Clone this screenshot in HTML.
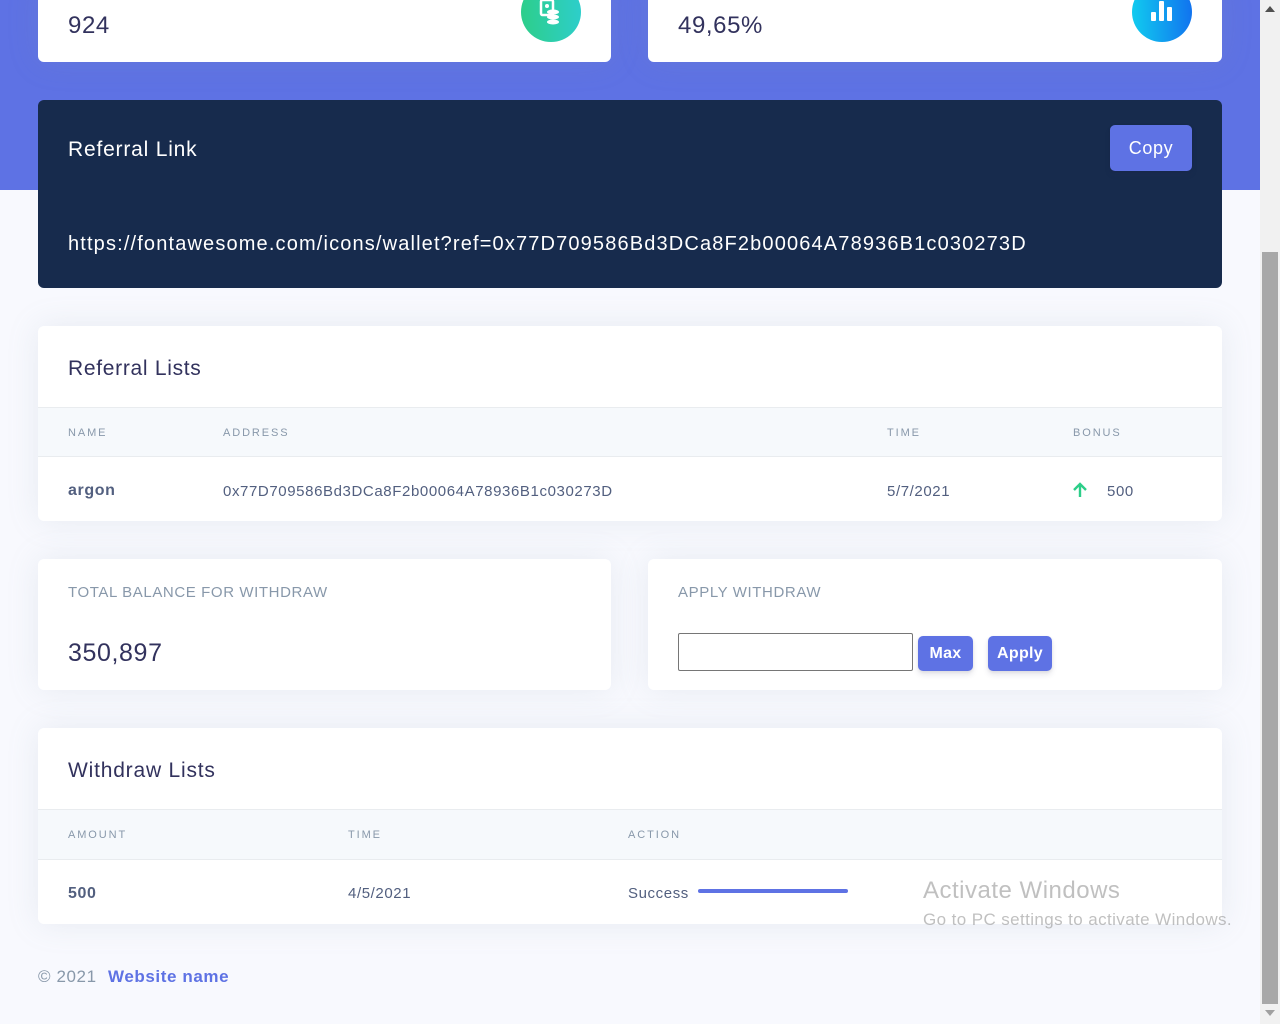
<!DOCTYPE html>
<html><head><meta charset="utf-8"><style>
*{margin:0;padding:0;box-sizing:border-box}
body{width:1280px;height:1024px;overflow:hidden;background:#f8f9fe;font-family:"Liberation Sans",sans-serif;position:relative;color:#525f7f;letter-spacing:0.6px}
.a{position:absolute}
.t{position:absolute;margin-top:2px}
.card{position:absolute;background:#fff;border-radius:6px;box-shadow:0 0 2rem 0 rgba(136,152,170,.15)}
.th{position:absolute;margin-top:2px;font-size:11px;letter-spacing:1.9px;color:#8898aa;text-transform:uppercase}
.btn{position:absolute;background:#5e72e4;color:#fff;border-radius:5px;display:flex;align-items:center;justify-content:center;box-shadow:0 4px 6px rgba(50,50,93,.11),0 1px 3px rgba(0,0,0,.08)}
</style></head><body>
<div class="a" style="left:0;top:0;width:1260px;height:190px;background:#5e72e4"></div>

<div class="card" style="left:38px;top:-20px;width:573px;height:82px"></div>
<div class="t" style="left:68px;top:10px;font-size:24px;color:#32325d">924</div>
<div class="a" style="left:521px;top:-18px;width:60px;height:60px;border-radius:50%;background:linear-gradient(87deg,#2dce89,#2dcecc)"></div>
<svg class="a" style="left:538px;top:0" width="28" height="26" viewBox="0 0 28 26"><rect x="3" y="0" width="12" height="15" rx="1.5" fill="none" stroke="#fff" stroke-width="2.5"/><circle cx="9" cy="6" r="2" fill="#fff"/><ellipse cx="15" cy="12" rx="6" ry="2.5" fill="#fff"/><ellipse cx="15" cy="17" rx="6" ry="2.5" fill="#fff"/><ellipse cx="15" cy="22" rx="6" ry="2.5" fill="#fff"/></svg>

<div class="card" style="left:648px;top:-20px;width:574px;height:82px"></div>
<div class="t" style="left:678px;top:10px;font-size:24px;color:#32325d">49,65%</div>
<div class="a" style="left:1132px;top:-18px;width:60px;height:60px;border-radius:50%;background:linear-gradient(87deg,#11cdef,#1171ef)"></div>
<svg class="a" style="left:1150px;top:0" width="24" height="22" viewBox="0 0 24 22"><rect x="1" y="12" width="5" height="9" rx="1" fill="#fff"/><rect x="9" y="1" width="5" height="20" rx="1" fill="#fff"/><rect x="17" y="7" width="5" height="14" rx="1" fill="#fff"/></svg>

<div class="a" style="left:38px;top:100px;width:1184px;height:188px;background:#172b4d;border-radius:6px"></div>
<div class="t" style="left:68px;top:136px;font-size:21px;color:#fff;letter-spacing:0.8px">Referral Link</div>
<div class="btn" style="left:1110px;top:125px;width:82px;height:46px;font-size:18px">Copy</div>
<div class="t" style="left:68px;top:231px;font-size:20px;color:#fff;letter-spacing:1.15px">https://fontawesome.com/icons/wallet?ref=0x77D709586Bd3DCa8F2b00064A78936B1c030273D</div>

<div class="card" style="left:38px;top:326px;width:1184px;height:195px;overflow:hidden">
<div class="a" style="left:0;top:81px;width:100%;height:50px;background:#f6f9fc;border-top:1px solid #e9ecef;border-bottom:1px solid #e9ecef"></div>
</div>
<div class="t" style="left:68px;top:355px;font-size:21px;color:#32325d;letter-spacing:0.7px">Referral Lists</div>
<div class="th" style="left:68px;top:425px">Name</div>
<div class="th" style="left:223px;top:425px">Address</div>
<div class="th" style="left:887px;top:425px">Time</div>
<div class="th" style="left:1073px;top:425px">Bonus</div>
<div class="t" style="left:68px;top:480px;font-size:16px;font-weight:bold;color:#525f7f">argon</div>
<div class="t" style="left:223px;top:481px;font-size:15px">0x77D709586Bd3DCa8F2b00064A78936B1c030273D</div>
<div class="t" style="left:887px;top:481px;font-size:15px">5/7/2021</div>
<svg class="a" style="left:1072px;top:482px" width="16" height="16" viewBox="0 0 16 16"><path d="M8 15V2M2 8l6-6 6 6" stroke="#2dce89" stroke-width="2.4" fill="none"/></svg>
<div class="t" style="left:1107px;top:481px;font-size:15px">500</div>

<div class="card" style="left:38px;top:559px;width:573px;height:131px"></div>
<div class="t" style="left:68px;top:582px;font-size:15px;color:#8898aa">TOTAL BALANCE FOR WITHDRAW</div>
<div class="t" style="left:68px;top:637px;font-size:25px;color:#32325d">350,897</div>

<div class="card" style="left:648px;top:559px;width:574px;height:131px"></div>
<div class="t" style="left:678px;top:582px;font-size:15px;color:#8898aa">APPLY WITHDRAW</div>
<div class="a" style="left:678px;top:633px;width:235px;height:38px;border:1px solid #767676;border-radius:2px;background:#fff"></div>
<div class="btn" style="left:918px;top:636px;width:55px;height:35px;font-size:16px;font-weight:bold;letter-spacing:0.3px">Max</div>
<div class="btn" style="left:988px;top:636px;width:64px;height:35px;font-size:16px;font-weight:bold;letter-spacing:0.3px">Apply</div>

<div class="card" style="left:38px;top:728px;width:1184px;height:196px;overflow:hidden">
<div class="a" style="left:0;top:81px;width:100%;height:51px;background:#f6f9fc;border-top:1px solid #e9ecef;border-bottom:1px solid #e9ecef"></div>
</div>
<div class="t" style="left:68px;top:757px;font-size:21px;color:#32325d;letter-spacing:0.8px">Withdraw Lists</div>
<div class="th" style="left:68px;top:827px">Amount</div>
<div class="th" style="left:348px;top:827px">Time</div>
<div class="th" style="left:628px;top:827px">Action</div>
<div class="t" style="left:68px;top:883px;font-size:16px;font-weight:bold">500</div>
<div class="t" style="left:348px;top:883px;font-size:15px">4/5/2021</div>
<div class="t" style="left:628px;top:883px;font-size:15px">Success</div>
<div class="a" style="left:698px;top:889px;width:150px;height:4px;border-radius:2px;background:#5e72e4"></div>

<div class="t" style="left:923px;top:875px;font-size:24px;color:rgba(150,150,150,.6);letter-spacing:0.5px">Activate Windows</div>
<div class="t" style="left:923px;top:908px;font-size:17px;color:rgba(150,150,150,.6);letter-spacing:0.4px">Go to PC settings to activate Windows.</div>

<div class="t" style="left:38px;top:965px;font-size:17px;color:#8898aa">© 2021 <span style="color:#5e72e4;font-weight:bold;margin-left:6px">Website name</span></div>

<div class="a" style="left:1260px;top:0;width:20px;height:1024px;background:#f1f1f1"></div>
<div class="a" style="left:1262px;top:252px;width:16px;height:752px;background:#a8a8a8"></div>
<div class="a" style="left:1265px;top:6px;width:0;height:0;border-left:5px solid transparent;border-right:5px solid transparent;border-bottom:6px solid #505050"></div>
<div class="a" style="left:1265px;top:1010px;width:0;height:0;border-left:5px solid transparent;border-right:5px solid transparent;border-top:6px solid #a0a0a0"></div>
</body></html>
